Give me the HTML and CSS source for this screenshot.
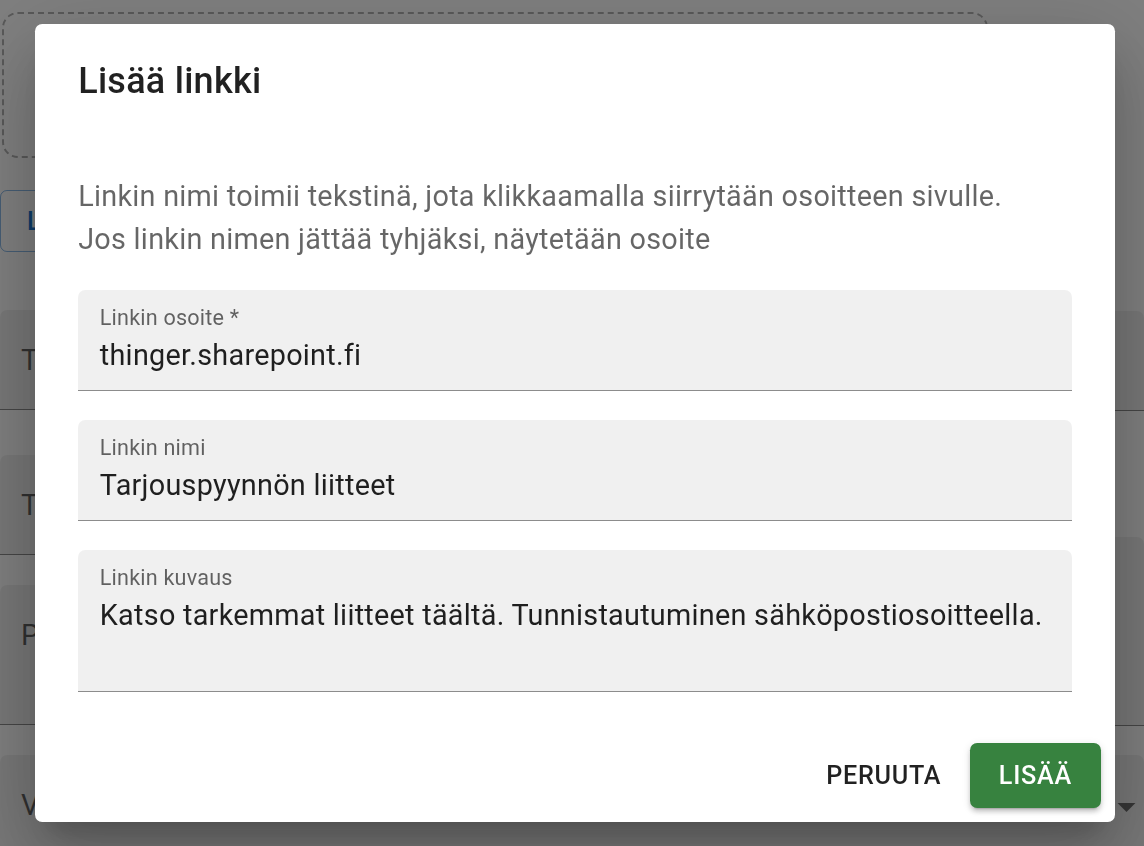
FILE: index.html
```html
<!DOCTYPE html>
<html lang="fi">
<head>
<meta charset="utf-8">
<title>Lisää linkki</title>
<link rel="stylesheet" href="styles.css">
</head>
<body>
<div class="page">
  <div class="dropzone"></div>
  <div class="outlined-btn">LISÄÄ LINKKI</div>
  <div class="bg-grid">
    <div class="bg-col">
      <div class="bg-field h100">Tarjouspyynnön otsikko</div>
      <div class="bg-field h100 gap45">Toimituspaikka</div>
      <div class="bg-field h140 gap30">Palvelun kuvaus</div>
    </div>
    <div class="bg-col">
      <div class="bg-field h100 top1"></div>
      <div class="bg-field h189 gap126"></div>
    </div>
  </div>
  <div class="bg-field bg-select">
    <span>Valitse kategoria</span>
    <svg class="arrow" viewBox="0 0 24 24" width="43" height="43"><path d="M7 10l5 5 5-5z" fill="rgba(0,0,0,0.54)"/></svg>
  </div>
</div>

<div class="backdrop">
  <div class="dialog" role="dialog">
    <h2 class="dialog-title">Lisää linkki</h2>
    <div class="dialog-content">
      <p class="dialog-text">Linkin nimi toimii tekstinä, jota klikkaamalla siirrytään osoitteen sivulle.<br>Jos linkin nimen jättää tyhjäksi, näytetään osoite</p>
      <div class="fields">
        <div class="field">
          <div class="field-label">Linkin osoite *</div>
          <div class="field-value">thinger.sharepoint.fi</div>
        </div>
        <div class="field">
          <div class="field-label">Linkin nimi</div>
          <div class="field-value">Tarjouspyynnön liitteet</div>
        </div>
        <div class="field">
          <div class="field-label">Linkin kuvaus</div>
          <div class="field-value multiline">Katso tarkemmat liitteet täältä. Tunnistautuminen sähköpostiosoitteella.</div>
        </div>
      </div>
    </div>
    <div class="dialog-actions">
      <button class="btn btn-text">PERUUTA</button>
      <button class="btn btn-contained">LISÄÄ</button>
    </div>
  </div>
</div>
</body>
</html>
```

FILE: styles.css
```css
* { box-sizing: border-box; }

html, body {
  margin: 0;
  padding: 0;
  width: 1144px;
  height: 846px;
  overflow: hidden;
  background: #ffffff;
  font-family: Roboto, "Liberation Sans", Arial, sans-serif;
}

/* ---------- background page ---------- */
.page {
  padding: 12px 0 0 0;
}

.dropzone {
  margin-left: 2px;
  width: 986px;
  height: 146px;
  border: 2.5px dashed rgba(0, 0, 0, 0.3);
  border-radius: 16px;
}

.outlined-btn {
  margin-top: 32px;
  width: 320px;
  height: 62px;
  padding: 0 0 0 26px;
  display: flex;
  align-items: center;
  border: 1.8px solid rgba(25, 118, 210, 0.5);
  border-radius: 7px;
  color: #1976d2;
  font-size: 25.2px;
  font-weight: 500;
  letter-spacing: 0.72px;
}

.bg-grid {
  margin-top: 58px;
  display: grid;
  grid-template-columns: 1fr 1fr;
  column-gap: 40px;
}

.bg-col {
  display: flex;
  flex-direction: column;
}

.bg-field {
  background: rgba(0, 0, 0, 0.06);
  border-bottom: 1.8px solid rgba(0, 0, 0, 0.42);
  border-radius: 7px 7px 0 0;
  padding: 30px 21px 0 21px;
  font-size: 28.8px;
  line-height: 40px;
  color: rgba(0, 0, 0, 0.6);
  white-space: nowrap;
  overflow: hidden;
}

.h100 { height: 100px; }
.h140 { height: 140px; }
.h189 { height: 189px; }
.gap45 { margin-top: 45px; }
.gap30 { margin-top: 30px; }
.gap126 { margin-top: 126px; }
.top1 { margin-top: 1px; }

.bg-select {
  margin-top: 29px;
  height: 100px;
  display: flex;
  justify-content: space-between;
  align-items: flex-start;
  padding-right: 0;
}

.bg-select .arrow {
  margin-top: 0;
  margin-right: -4px;
}

/* ---------- backdrop & dialog ---------- */
.backdrop {
  position: fixed;
  inset: 0;
  background: rgba(0, 0, 0, 0.5);
  display: flex;
  align-items: flex-start;
  padding: 24px 0 0 35px;
}

.dialog {
  width: 1080px;
  height: 798px;
  background: #ffffff;
  border-radius: 7.2px;
  display: flex;
  flex-direction: column;
  box-shadow:
    0 20px 27px -13px rgba(0, 0, 0, 0.2),
    0 43px 68px 5px rgba(0, 0, 0, 0.14),
    0 16px 83px 14px rgba(0, 0, 0, 0.12);
}

.dialog-title {
  margin: 0;
  padding: 28.8px 43.2px;
  font-size: 36px;
  line-height: 57.6px;
  font-weight: 500;
  letter-spacing: 0.27px;
  color: rgba(0, 0, 0, 0.87);
}

.dialog-content {
  padding: 36px 43.2px 36px 43.2px;
  flex: 1;
}

.dialog-text {
  margin: 0;
  font-size: 28.8px;
  line-height: 43.2px;
  letter-spacing: 0.27px;
  color: rgba(0, 0, 0, 0.6);
}

.fields {
  margin-top: 28.8px;
  display: flex;
  flex-direction: column;
  gap: 28.8px;
}

.field {
  background: rgba(0, 0, 0, 0.06);
  border-radius: 7.2px 7.2px 0 0;
  border-bottom: 1.8px solid rgba(0, 0, 0, 0.42);
  padding: 12.6px 21.6px 13.6px 21.6px;
}

.field-label {
  font-size: 21.6px;
  line-height: 30px;
  letter-spacing: 0.2px;
  color: rgba(0, 0, 0, 0.6);
  margin-bottom: 2.4px;
}

.field-value {
  font-size: 28.8px;
  line-height: 41.4px;
  letter-spacing: 0.27px;
  color: rgba(0, 0, 0, 0.87);
}

.field-value.multiline {
  min-height: 82.8px;
}

.dialog-actions {
  padding: 14.4px;
  display: flex;
  justify-content: flex-end;
  align-items: center;
  gap: 14.4px;
}

.btn {
  font-family: Roboto, "Liberation Sans", Arial, sans-serif;
  font-size: 25.2px;
  font-weight: 500;
  line-height: 44px;
  letter-spacing: 0.72px;
  text-transform: uppercase;
  border: none;
  border-radius: 7.2px;
  cursor: pointer;
  margin: 0;
}

.btn-text {
  background: transparent;
  color: rgba(0, 0, 0, 0.87);
  padding: 10.8px 14.4px;
}

.btn-contained {
  background: #37823f;
  color: #ffffff;
  padding: 10.5px 28.8px;
  box-shadow:
    0 5px 2px -4px rgba(0, 0, 0, 0.2),
    0 4px 4px 0 rgba(0, 0, 0, 0.14),
    0 2px 9px 0 rgba(0, 0, 0, 0.12);
}
```
